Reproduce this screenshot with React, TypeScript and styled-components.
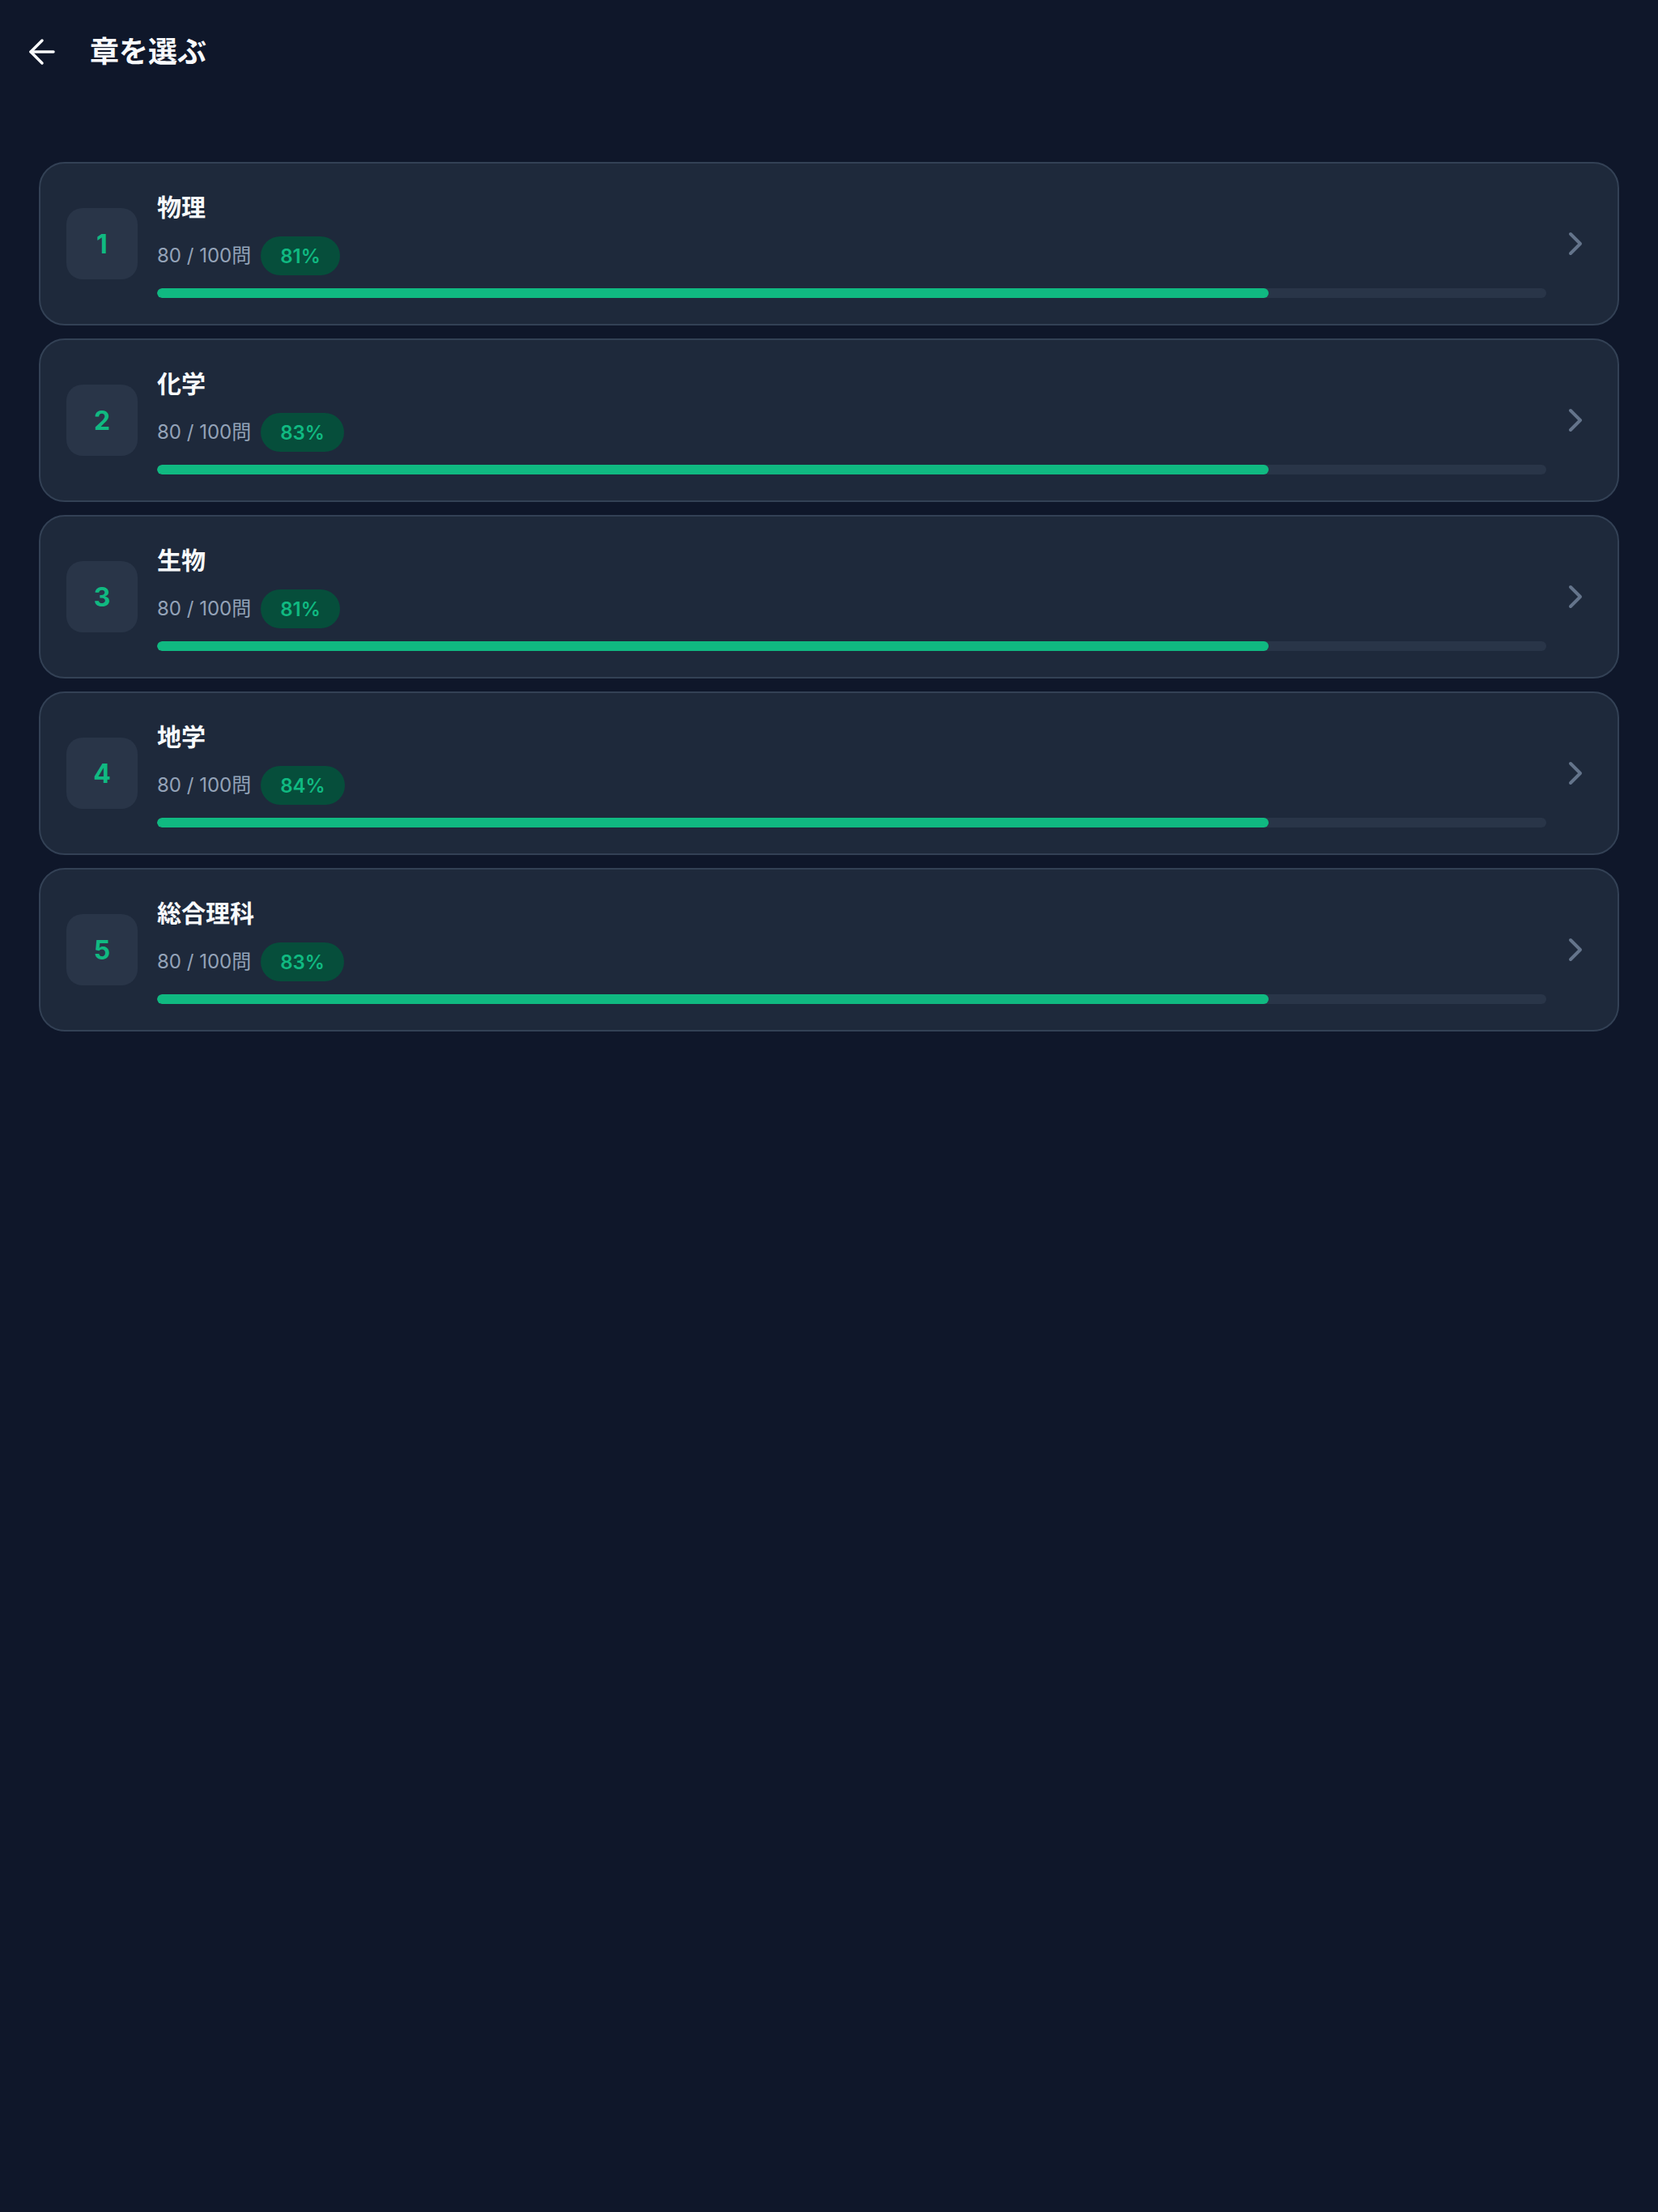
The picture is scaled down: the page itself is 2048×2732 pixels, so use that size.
import React from 'react'
import styled, { createGlobalStyle } from 'styled-components'
import { ArrowLeft, ChevronRight } from 'lucide-react'

const GlobalStyle = createGlobalStyle`
  html, body {
    margin: 0;
    padding: 0;
    background: #0f172a;
  }
  body {
    font-family: "Inter", "Noto Sans CJK JP", sans-serif;
    -webkit-font-smoothing: antialiased;
  }
`

const Page = styled.div`
  min-height: 2732px;
  background: #0f172a;
  color: #f8fafc;
`

const Header = styled.header`
  height: 128px;
  display: flex;
  align-items: center;
  gap: 35px;
  padding: 0 28px;
  box-sizing: border-box;
`

const BackButton = styled.button`
  width: 48px;
  height: 48px;
  padding: 0;
  border: none;
  background: transparent;
  color: #f8fafc;
  display: flex;
  align-items: center;
  justify-content: center;
  cursor: pointer;
`

const Title = styled.h1`
  margin: 0;
  font-size: 36px;
  line-height: 48px;
  font-weight: 700;
  color: #f8fafc;
`

const List = styled.main`
  display: flex;
  flex-direction: column;
  gap: 16px;
  padding: 72px 48px;
`

const Card = styled.div`
  display: flex;
  align-items: center;
  padding: 32px 28px 32px 32px;
  border: 2px solid #334155;
  border-radius: 32px;
  background: #1e293b;
  cursor: pointer;
`

const NumberBox = styled.div`
  width: 88px;
  height: 88px;
  flex-shrink: 0;
  border-radius: 20px;
  background: #293548;
  color: #10b981;
  display: flex;
  align-items: center;
  justify-content: center;
  font-size: 32px;
  font-weight: 700;
`

const Body = styled.div`
  flex: 1;
  min-width: 0;
  margin-left: 24px;
`

const Name = styled.div`
  font-size: 30px;
  line-height: 44px;
  font-weight: 700;
  color: #f8fafc;
  margin-bottom: 14px;
`

const Meta = styled.div`
  display: flex;
  align-items: center;
  gap: 12px;
  height: 48px;
`

const Count = styled.span`
  font-size: 24px;
  line-height: 32px;
  color: #94a3b8;
`

const Badge = styled.span`
  height: 48px;
  padding: 0 24px;
  border-radius: 24px;
  background: #064e3b;
  color: #10b981;
  font-size: 24px;
  font-weight: 600;
  display: flex;
  align-items: center;
`

const Track = styled.div`
  margin-top: 16px;
  height: 12px;
  border-radius: 6px;
  background: #293548;
  overflow: hidden;
`

const Fill = styled.div`
  height: 100%;
  border-radius: 6px;
  background: #10b981;
`

const Chevron = styled.div`
  margin-left: 12px;
  width: 48px;
  height: 48px;
  flex-shrink: 0;
  color: #64748b;
  display: flex;
  align-items: center;
  justify-content: center;
`

const chapters = [
  { id: 1, name: '物理', done: 80, total: 100, rate: 81 },
  { id: 2, name: '化学', done: 80, total: 100, rate: 83 },
  { id: 3, name: '生物', done: 80, total: 100, rate: 81 },
  { id: 4, name: '地学', done: 80, total: 100, rate: 84 },
  { id: 5, name: '総合理科', done: 80, total: 100, rate: 83 }
]

const App = () => {
  return (
    <Page>
      <GlobalStyle />
      <Header>
        <BackButton aria-label='戻る'>
          <ArrowLeft size={ 48 } strokeWidth={ 1.75 } />
        </BackButton>
        <Title>章を選ぶ</Title>
      </Header>
      <List>
        { chapters.map((ch) => (
          <Card key={ `chapter-${ch.id}` }>
            <NumberBox>{ ch.id }</NumberBox>
            <Body>
              <Name>{ ch.name }</Name>
              <Meta>
                <Count>{ `${ch.done} / ${ch.total}問` }</Count>
                <Badge>{ `${ch.rate}%` }</Badge>
              </Meta>
              <Track>
                <Fill style={ { width: `${(ch.done / ch.total) * 100}%` } } />
              </Track>
            </Body>
            <Chevron>
              <ChevronRight size={ 48 } strokeWidth={ 2 } />
            </Chevron>
          </Card>
        )) }
      </List>
    </Page>
  )
}

export default App
